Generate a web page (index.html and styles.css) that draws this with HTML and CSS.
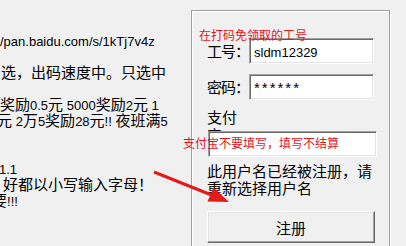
FILE: index.html
```html
<!DOCTYPE html>
<html>
<head>
<meta charset="utf-8">
<link rel="stylesheet" href="styles.css">
</head>
<body>
<div class="window">
  <div class="info">
    <div class="line"><span class="en">/pan.baidu.com/s/1kTj7v4z</span></div>
    <div class="line"></div>
    <div class="line in1">选，出码速度中。只选中</div>
    <div class="line"></div>
    <div class="line">奖励<span class="en">0.5</span>元<span class="en"> 5000</span>奖励<span class="en">2</span>元<span class="en"> 1</span></div>
    <div class="line cut3">元<span class="en"> 2</span>万<span class="en">5</span>奖励<span class="en">28</span>元<span class="en">!! </span>夜班满<span class="en">5</span></div>
    <div class="line"></div>
    <div class="line"></div>
    <div class="line cut1"><span class="en">1.1</span></div>
    <div class="line in3">好都以小写输入字母！</div>
    <div class="line cut7">要<span class="en">!!!</span></div>
  </div>
  <div class="group">
    <div class="row">
      <span class="label">工号：</span>
      <div class="field"><span class="en">sldm12329</span></div>
    </div>
    <div class="row">
      <span class="label">密码：</span>
      <div class="field pw">******</div>
    </div>
    <div class="label-wrap">支付宝：</div>
    <div class="field wide"></div>
    <div class="msg">此用户名已经被注册，请重新选择用户名</div>
    <div class="button">注册</div>
  </div>
</div>
<div class="note note-top">在打码免领取的工号</div>
<div class="note note-pay">支付宝不要填写，填写不结算</div>
<svg class="arrow" width="406" height="246" viewBox="0 0 406 246">
  <line x1="154" y1="172" x2="214" y2="196" stroke="#e31b1b" stroke-width="3"/>
  <polygon points="229,202 207.5,201.5 213.5,187.5" fill="#e31b1b"/>
</svg>
</body>
</html>
```
FILE: styles.css
```css
html, body {
  margin: 0;
  padding: 0;
  background: #f0f0f0;
  width: 406px;
  height: 246px;
  overflow: hidden;
}
body {
  font-family: "Noto Sans CJK SC", "Noto Sans", sans-serif;
  color: #000;
  position: relative;
}
.en {
  font-family: "Liberation Sans", "Noto Sans CJK SC", sans-serif;
  font-size: 13px;
}
.window {
  display: flex;
  align-items: flex-start;
  height: 246px;
  overflow: hidden;
}
.info {
  width: 191px;
  flex: none;
  overflow: hidden;
  padding-top: 32px;
  font-size: 15px;
  line-height: 16px;
  white-space: nowrap;
}
.line {
  height: 16px;
}
.in1 { margin-left: 1px; }
.in3 { margin-left: 3px; }
.cut1 { margin-left: -1px; }
.cut3 { margin-left: -3px; }
.cut7 { margin-left: -8px; }
.group {
  margin-top: 10px;
  width: 199px;
  height: 250px;
  box-sizing: border-box;
  border: 1px solid #a0a0a0;
  box-shadow: inset 1px 1px 0 #fff, 1px 1px 0 #fff;
  padding: 27px 0 0 15px;
  font-size: 15px;
  flex: none;
}
.row {
  display: flex;
  align-items: center;
  height: 26px;
  margin-bottom: 10px;
}
.label {
  width: 42px;
  flex: none;
  line-height: 18px;
  white-space: nowrap;
  letter-spacing: -1px;
}
.field {
  box-sizing: border-box;
  width: 125px;
  height: 26px;
  background: #fff;
  border-top: 1px solid #a0a0a0;
  border-left: 1px solid #a0a0a0;
  border-right: 1px solid #fff;
  border-bottom: 1px solid #fff;
  box-shadow: inset 1px 1px 0 #696969, inset -1px -1px 0 #e3e3e3;
  padding: 3px 0 0 4px;
  font-size: 15px;
  line-height: 18px;
}
.pw {
  font-family: "Liberation Sans", sans-serif;
  font-size: 15px;
  letter-spacing: 2px;
  line-height: 18px;
  padding-top: 4px;
}
.label-wrap {
  margin-top: -2px;
  width: 32px;
  height: 23px;
  overflow: hidden;
  line-height: 18px;
}
.wide {
  margin-left: 1px;
  width: 169px;
}
.msg {
  margin-top: 5px;
  width: 168px;
  line-height: 17px;
}
.button {
  margin-top: 15px;
  box-sizing: border-box;
  width: 168px;
  height: 32px;
  border-top: 1px solid #fff;
  border-left: 1px solid #fff;
  border-right: 1px solid #696969;
  border-bottom: 1px solid #696969;
  box-shadow: inset -1px -1px 0 #a0a0a0, inset 1px 1px 0 #e3e3e3;
  display: flex;
  align-items: center;
  justify-content: center;
  background: #f0f0f0;
}
.note {
  position: absolute;
  color: #e3161c;
  font-size: 12px;
  line-height: 14px;
  white-space: nowrap;
}
.note-top {
  left: 199px;
  top: 28px;
}
.note-pay {
  left: 183px;
  top: 136px;
}
.arrow {
  position: absolute;
  left: 0;
  top: 0;
}
```
